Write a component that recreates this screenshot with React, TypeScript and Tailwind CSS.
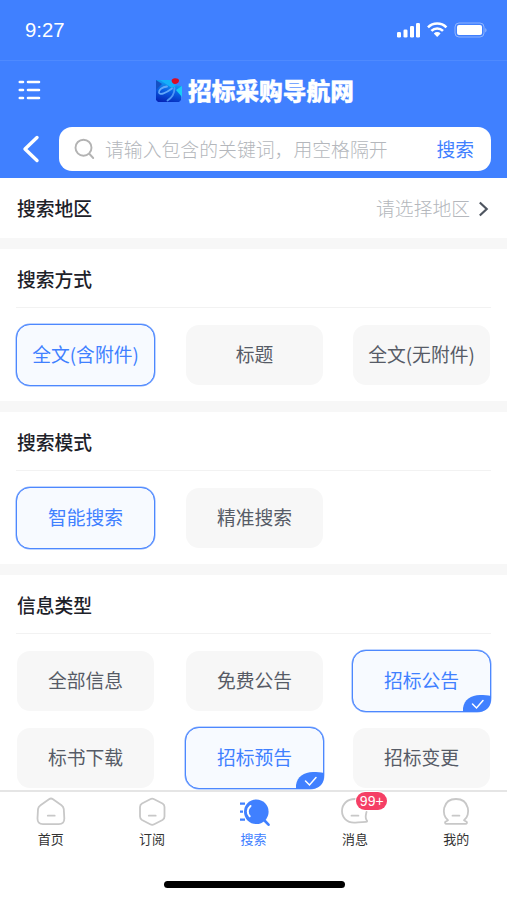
import type { ReactNode } from 'react';
import clsx from 'clsx';

type Option = { label: string; active?: boolean; checked?: boolean };

const modes: Option[] = [
  { label: '全文(含附件)', active: true },
  { label: '标题' },
  { label: '全文(无附件)' },
];

const precision: Option[] = [{ label: '智能搜索', active: true }, { label: '精准搜索' }];

const infoTypes: Option[] = [
  { label: '全部信息' },
  { label: '免费公告' },
  { label: '招标公告', active: true, checked: true },
  { label: '标书下载' },
  { label: '招标预告', active: true, checked: true },
  { label: '招标变更' },
];

const StatusBar = () => (
  <div className="flex h-[61px] items-center justify-between border-b border-[#4e8aff] pl-[25px] pr-[20px]">
    <span className="font-['Liberation_Sans',sans-serif] text-[20.3px] leading-none text-white">9:27</span>
    <svg width="92" height="18" viewBox="0 0 92 18" fill="#fff">
      <rect x="2" y="11" width="4" height="5.5" rx="1.3" />
      <rect x="8.5" y="8.5" width="4" height="8" rx="1.3" />
      <rect x="15" y="5" width="4" height="11.5" rx="1.3" />
      <rect x="21" y="2" width="4" height="14.5" rx="1.3" />
      <g fill="none" stroke="#fff" strokeWidth="2.6">
        <path d="M33 6.3a13 13 0 0 1 18.4 0" />
        <path d="M36.4 9.9a8.2 8.2 0 0 1 11.6 0" />
      </g>
      <path d="M38.8 12.4a4.9 4.9 0 0 1 6.8 0l-3.4 3.5z" />
      <rect x="60" y="2" width="29" height="14" rx="4" fill="none" stroke="#fff" strokeOpacity=".4" />
      <rect x="62" y="4" width="25" height="10" rx="2" />
      <path d="M90.3 7v4.5c1.6-.8 1.6-3.7 0-4.5z" opacity=".45" />
    </svg>
  </div>
);

const Logo = () => (
  <svg className="mr-[5px] shrink-0" width="28" height="26" viewBox="0 0 28 26">
    <defs>
      <linearGradient id="logo-bg" x1="0.6" y1="0" x2="0.3" y2="1">
        <stop offset="0" stopColor="#14b4f8" />
        <stop offset=".5" stopColor="#0a5fe4" />
        <stop offset="1" stopColor="#0526b8" />
      </linearGradient>
    </defs>
    <path d="M1 2h14l5 5 6 1v14l-2 2H3l-2-2z" fill="url(#logo-bg)" />
    <path d="M5 2h10l6 6-4 2z" fill="#14b0fa" />
    <path d="M27 8v11l-6-7z" fill="#19cdf6" />
    <path d="M1 2l6 4-6 6z" fill="#1450c4" />
    <path d="M12 8.500C7 9 3.500 12 4 14.500c.8 3 7 .5 13-4" fill="none" stroke="#62a8fa" strokeWidth="1.800" strokeLinecap="round" />
    <path d="M19.500 10c0 5-3 10-7 12.500" fill="none" stroke="#4f97f6" strokeWidth="1.800" strokeLinecap="round" />
    <path d="M17 1.500c2-2 7-1.500 7 1 0 2-2 3.500-4 3.500-2.500 0-4-2.500-3-4.500z" fill="#d90d24" />
  </svg>
);

const Header = () => (
  <header className="h-[178px] bg-[#4080ff]">
    <StatusBar />
    <div className="flex h-[59px] items-center">
      <svg className="mb-[2px] ml-[18px] shrink-0" width="24" height="22" viewBox="0 0 24 22" stroke="#fff" strokeWidth="2.600" strokeLinecap="round">
        <path d="M1.800 3h3.200M10 3h11M1.800 11h3.200M10 11h11M1.800 19h3.200M10 19h11" />
      </svg>
      <div className="ml-[113px] flex items-center">
        <Logo />
        <h1 className="whitespace-nowrap text-[23.7px] font-black leading-none text-white [-webkit-text-stroke:0.3px_white]">招标采购导航网</h1>
      </div>
    </div>
    <div className="flex items-center pt-[7px]">
      <svg className="ml-[22px] shrink-0" width="18" height="28" viewBox="0 0 18 28" fill="none" stroke="#fff" strokeWidth="3.400" strokeLinecap="round" strokeLinejoin="round">
        <path d="M15 2.500L3 14l12 11.500" />
      </svg>
      <div className="ml-[19px] flex h-[44px] w-[432px] items-center rounded-[13px] bg-white text-[18.8px]">
        <svg className="ml-[15px] shrink-0" width="22" height="22" viewBox="0 0 22 22" fill="none" stroke="#b3b3b3" strokeWidth="1.900" strokeLinecap="round">
          <circle cx="9.500" cy="9.700" r="8" />
          <path d="M15.500 16l3.700 4" />
        </svg>
        <span className="ml-[9px] flex-1 whitespace-nowrap text-[18.85px] font-light text-[#b4b7bc]">请输入包含的关键词，用空格隔开</span>
        <button className="mr-[17px] text-[#4080ff]">搜索</button>
      </div>
    </div>
  </header>
);

const OptionButton = ({ label, active, checked }: Option) => (
  <button
    className={clsx(
      'relative flex h-[62px] w-[139px] items-center justify-center whitespace-nowrap rounded-[14px] border bg-clip-padding pb-px text-[18.8px]',
      active
        ? 'border-[#4d88fe] bg-[#f7faff] text-[#4080ff] shadow-[0_0_0_0.5px_#7fa9ff]'
        : 'border-transparent bg-[#f7f7f7] text-[#565b66]',
    )}
  >
    {label}
    {checked && (
      <svg className="absolute -bottom-px -right-px" width="28" height="17" viewBox="0 0 28 17">
        <path d="M0 17v-4C1 5 8 0 17 0c4 0 8 .4 11 1v3c0 8-5 13-13 13z" fill="#4080ff" />
        <path d="M9.500 9l4 4L20 5.500" fill="none" stroke="#fff" strokeWidth="1.500" strokeLinecap="round" />
      </svg>
    )}
  </button>
);

const Section = ({ title, options }: { title: string; options: Option[] }) => (
  <section className="mt-[11px] bg-white px-4 pb-4">
    <h2 className="h-[59px] border-b border-[#f2f2f2] pl-px text-[18.8px] font-medium leading-[59px] text-[#1d2129]">{title}</h2>
    <div className="-mb-px grid grid-cols-[169px_167px_139px] gap-y-[15px] pt-4">
      {options.map((option) => (
        <OptionButton key={option.label} {...option} />
      ))}
    </div>
  </section>
);

const Tab = ({ label, active, badge, children }: { label: string; active?: boolean; badge?: string; children: ReactNode }) => (
  <div className="relative flex flex-1 flex-col items-center">
    <svg className="mt-[5px]" width="32" height="30" viewBox="0 0 32 30" fill="none" stroke="#c8c8c8" strokeWidth="1.800" strokeLinejoin="round" strokeLinecap="round">
      {children}
    </svg>
    <span className={clsx('mt-[3px] text-[13px] leading-[18px]', active ? 'text-[#4080ff]' : 'text-[#333]')}>{label}</span>
    {badge && (
      <span className="absolute left-[52px] top-0 flex h-[18px] w-[31px] items-center justify-center rounded-full bg-[#f53f65] font-['Liberation_Sans',sans-serif] text-[14px] leading-none text-white ring-1 ring-white">
        {badge}
      </span>
    )}
  </div>
);

const TabBar = () => (
  <nav className="relative h-[110px] shrink-0 border-t-2 border-[#e5e5e5] bg-white">
    <div className="flex">
      <Tab label="首页">
        <path d="M14 2.200q2-1.400 4 0l8.500 6q2 1.400 2.300 4l.5 9q.2 6-5.500 6H8q-5.700 0-5.500-6l.5-9q.3-2.600 2.500-4z" />
        <path d="M12.800 18.700h6.900" />
      </Tab>
      <Tab label="订阅">
        <path d="M14.200 2.200q2-1 4 0l8.300 4.300q2 1.200 2 3.500v9.500q0 2.300-2 3.500l-8.300 4.300q-2 1-4 0L6 23q-2-1.200-2-3.500V10q0-2.300 2-3.500z" />
        <path d="M12.800 18.700h6.900" />
      </Tab>
      <Tab label="搜索" active>
        <circle cx="18.300" cy="14.700" r="12.300" fill="#4080ff" stroke="none" />
        <path d="M26.500 23.500l4 4.200" stroke="#4080ff" strokeWidth="2.600" />
        <path d="M2 6.700h5M2 14.700h3M2 22.700h5" stroke="#4080ff" strokeWidth="2.200" strokeLinecap="butt" />
        <path d="M12.500 9c-3.500 3-3.500 7.500-.8 10.300" stroke="#fff" strokeWidth="2" />
      </Tab>
      <Tab label="消息" badge="99+">
        <path d="M16 2C8 2 3 7.300 3 14s5 11.600 12 11.600c3 0 6-.8 12-.8 1.200 0 1.500-.8.800-1.500-2-2.300-1.300-4-.3-8.300" />
        <path d="M12.500 18.700h6.900" />
      </Tab>
      <Tab label="我的">
        <path d="M8 23.300C.8 18 2.500 2 16 2s15.200 16 8 21.300l2.500 1.500c1 .8.300 2-.8 2H6.300c-1.100 0-1.800-1.200-.8-2z" />
        <path d="M12.500 18.700h6.900" />
      </Tab>
    </div>
    <div className="ml-[164px] mt-[33px] h-[7px] w-[181px] rounded-full bg-black" />
  </nav>
);

export default function App() {
  return (
    <div className="flex h-[900px] w-[507px] flex-col overflow-hidden bg-[#f7f7f7] font-['Noto_Sans_CJK_SC',sans-serif]">
      <Header />
      <main className="min-h-0 flex-1 overflow-hidden">
        <div className="flex h-[60px] items-center bg-white pl-[17px] pr-[18px] text-[18.8px]">
          <h2 className="flex-1 font-medium text-[#1d2129]">搜索地区</h2>
          <span className="font-light text-[#b4b7bc]">请选择地区</span>
          <svg className="ml-[8px] mt-px" width="11" height="16" viewBox="0 0 11 16" fill="none" stroke="#4e5560" strokeWidth="2.200">
            <path d="M1.800 1.500L8.700 8l-6.900 6.500" />
          </svg>
        </div>
        <Section title="搜索方式" options={modes} />
        <Section title="搜索模式" options={precision} />
        <Section title="信息类型" options={infoTypes} />
      </main>
      <TabBar />
    </div>
  );
}
